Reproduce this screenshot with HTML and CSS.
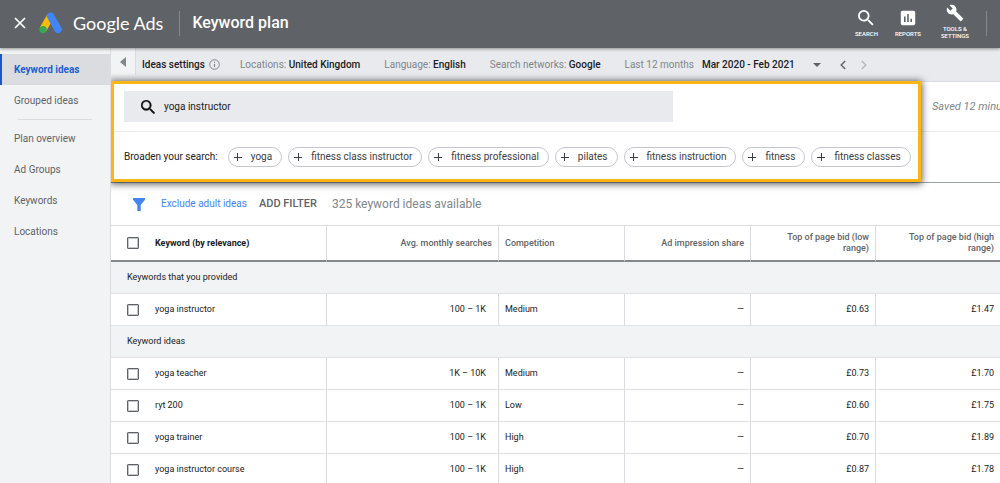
FILE: index.html
```html
<!DOCTYPE html>
<html lang="en">
<head>
<meta charset="utf-8">
<title>Keyword plan - Google Ads</title>
<link rel="stylesheet" href="styles.css">
</head>
<body>
<header class="topbar">
  <button class="close" aria-label="Close"><svg width="12" height="12" viewBox="0 0 12 12"><path d="M1 1l10 10M11 1L1 11" stroke="#fff" stroke-width="1.7"/></svg></button>
  <svg class="logo" width="24" height="22" viewBox="0 0 24 22" aria-hidden="true">
    <path d="M11.600 4.200L4 17.400" stroke="#fbbc04" stroke-width="7.400"/>
    <path d="M11.600 4.200L19 17.400" stroke="#4285f4" stroke-width="7.400" stroke-linecap="round"/>
    <circle cx="4" cy="17.600" r="3.700" fill="#34a853"/>
  </svg>
  <span class="brand">Google Ads</span>
  <span class="rule"></span>
  <h1 class="title">Keyword plan</h1>
  <nav class="tools">
    <button class="tool tool-search"><svg width="16" height="16" viewBox="3 3 18 18"><path fill="#fff" d="M15.500 14h-.79l-.28-.27A6.470 6.470 0 0016 9.500 6.500 6.500 0 109.500 16c1.610 0 3.090-.59 4.230-1.570l.27.28v.79l5 4.990L20.490 19l-4.990-5zm-6 0C7.010 14 5 11.990 5 9.500S7.010 5 9.500 5 14 7.010 14 9.500 11.990 14 9.500 14z"/></svg><span>SEARCH</span></button>
    <button class="tool tool-reports"><svg width="16" height="16" viewBox="2 2 20 20"><path fill="#fff" d="M19 3H5c-1.100 0-2 .9-2 2v14c0 1.100.9 2 2 2h14c1.100 0 2-.9 2-2V5c0-1.100-.9-2-2-2zM9 17H7v-7h2v7zm4 0h-2V7h2v10zm4 0h-2v-4h2v4z"/></svg><span>REPORTS</span></button>
    <button class="tool tool-settings"><svg width="18" height="18" viewBox="0 0 24 24"><path fill="#fff" d="M22.700 19l-9.100-9.100c.9-2.300.4-5-1.500-6.900-2-2-5-2.400-7.400-1.300L9 6 6 9 1.600 4.700C.4 7.100.9 10.100 2.900 12.100c1.900 1.900 4.600 2.400 6.900 1.500l9.100 9.100c.4.4 1 .4 1.400 0l2.300-2.300c.5-.4.5-1.100.1-1.400z"/></svg><span>TOOLS &amp;<br>SETTINGS</span></button>
    <span class="rule"></span>
  </nav>
</header>
<div class="shell">
  <nav class="sidebar">
    <a class="side-link active" href="#ideas">Keyword ideas</a>
    <a class="side-link" href="#grouped">Grouped ideas</a>
    <hr class="side-rule">
    <a class="side-link" href="#overview">Plan overview</a>
    <a class="side-link" href="#groups">Ad Groups</a>
    <a class="side-link" href="#keywords">Keywords</a>
    <a class="side-link" href="#locations">Locations</a>
  </nav>
  <main class="main">
    <div class="settings">
      <button class="collapse" aria-label="Collapse menu"><svg width="6" height="10" viewBox="0 0 6 10"><path d="M6 0v10L0 5z" fill="#80868b"/></svg></button>
      <span class="setting ideas"><b>Ideas settings</b><svg width="11" height="11" viewBox="0 0 11 11"><circle cx="5.500" cy="5.500" r="4.800" fill="none" stroke="#80868b"/><path d="M5.500 5v3M5.500 2.700v1.200" stroke="#80868b" stroke-width="1.100"/></svg></span>
      <span class="setting locations">Locations: <b>United Kingdom</b></span>
      <span class="setting language">Language: <b>English</b></span>
      <span class="setting networks">Search networks: <b>Google</b></span>
      <span class="setting period">Last 12 months</span>
      <button class="dates"><span>Mar 2020 - Feb 2021</span><svg width="8" height="4" viewBox="0 0 8 4"><path d="M0 0h8L4 4z" fill="#5f6368"/></svg></button>
      <button class="step" aria-label="Previous"><svg width="6" height="10" viewBox="0 0 6 10"><path d="M5.200 1L1.200 5l4 4" fill="none" stroke="#5f6368" stroke-width="1.400"/></svg></button>
      <button class="step" aria-label="Next" disabled><svg width="6" height="10" viewBox="0 0 6 10"><path d="M.8 1l4 4-4 4" fill="none" stroke="#b4b8bc" stroke-width="1.400"/></svg></button>
    </div>
    <section class="panel">
      <div class="highlight">
        <div class="search-row">
          <label class="search"><svg width="14" height="14" viewBox="3 3 17.500 17.500"><path fill="#111" stroke="#111" stroke-width=".4" d="M15.500 14h-.79l-.28-.27A6.470 6.470 0 0016 9.500 6.500 6.500 0 109.500 16c1.610 0 3.090-.59 4.230-1.570l.27.28v.79l5 4.990L20.490 19l-4.990-5zm-6 0C7.010 14 5 11.990 5 9.500S7.010 5 9.500 5 14 7.010 14 9.500 11.990 14 9.500 14z"/></svg><input type="text" value="yoga instructor" aria-label="Keywords"></label>
        </div>
        <div class="broaden">
          <span class="broaden-label">Broaden your search:</span>
          <button class="chip"><i class="plus"></i>yoga</button>
          <button class="chip"><i class="plus"></i>fitness class instructor</button>
          <button class="chip"><i class="plus"></i>fitness professional</button>
          <button class="chip"><i class="plus"></i>pilates</button>
          <button class="chip"><i class="plus"></i>fitness instruction</button>
          <button class="chip"><i class="plus"></i>fitness</button>
          <button class="chip"><i class="plus"></i>fitness classes</button>
        </div>
      </div>
      <div class="status"><p class="saved">Saved 12 minutes ago</p></div>
    </section>
    <div class="filters">
      <svg width="12" height="13" viewBox="0 0 12 13"><path d="M0 0h12v1.800L7.700 7v6H4.300V7L0 1.800z" fill="#4285f4"/></svg>
      <a class="exclude" href="#exclude">Exclude adult ideas</a>
      <button class="add">ADD FILTER</button>
      <span class="count">325 keyword ideas available</span>
    </div>
    <table class="grid">
      <colgroup><col><col class="c-search"><col class="c-std"><col class="c-std"><col class="c-low"><col class="c-high"></colgroup>
      <thead>
        <tr><th class="kw"><label><input type="checkbox">Keyword (by relevance)</label></th><th class="num">Avg. monthly searches</th><th>Competition</th><th class="num">Ad impression share</th><th class="num">Top of page bid (low<br>range)</th><th class="num">Top of page bid (high<br>range)</th></tr>
      </thead>
      <tbody>
        <tr class="group"><td colspan="6">Keywords that you provided</td></tr>
        <tr><td class="kw"><label><input type="checkbox">yoga instructor</label></td><td class="num vol">100 – 1K</td><td>Medium</td><td class="num">—</td><td class="num">£0.63</td><td class="num">£1.47</td></tr>
        <tr class="group"><td colspan="6">Keyword ideas</td></tr>
        <tr><td class="kw"><label><input type="checkbox">yoga teacher</label></td><td class="num vol">1K – 10K</td><td>Medium</td><td class="num">—</td><td class="num">£0.73</td><td class="num">£1.70</td></tr>
        <tr><td class="kw"><label><input type="checkbox">ryt 200</label></td><td class="num vol">100 – 1K</td><td>Low</td><td class="num">—</td><td class="num">£0.60</td><td class="num">£1.75</td></tr>
        <tr><td class="kw"><label><input type="checkbox">yoga trainer</label></td><td class="num vol">100 – 1K</td><td>High</td><td class="num">—</td><td class="num">£0.70</td><td class="num">£1.89</td></tr>
        <tr><td class="kw"><label><input type="checkbox">yoga instructor course</label></td><td class="num vol">100 – 1K</td><td>High</td><td class="num">—</td><td class="num">£0.87</td><td class="num">£1.78</td></tr>
      </tbody>
    </table>
  </main>
</div>
</body>
</html>
```
FILE: styles.css
```css
* { box-sizing: border-box; }
body {
  margin: 0;
  height: 100vh;
  display: flex;
  flex-direction: column;
  overflow: hidden;
  font: 10px/16px Roboto, sans-serif;
  color: #202124;
  background: #fff;
}
button { border: 0; padding: 0; margin: 0; background: none; font: inherit; color: inherit; white-space: nowrap; }
svg { display: block; flex: none; }
b { font-weight: 500; color: #202124; }

.topbar {
  flex: none;
  height: 48px;
  display: flex;
  align-items: center;
  padding: 0 13px 0 14px;
  background: #5f6368;
  color: #fff;
  position: relative;
  z-index: 2;
  box-shadow: 0 1px 3px rgba(0, 0, 0, .4);
}
.topbar > * { margin-bottom: 2px; }
.logo { margin-left: 13px; }
.brand { margin-left: 10px; font: 18px/24px Lato, sans-serif; }
.rule { width: 1px; height: 25px; background: #85898d; }
.topbar > .rule { margin-left: 16px; }
.title { margin: 0 0 2px 12px; font-size: 16px; line-height: 24px; font-weight: 500; }
.tools { margin-left: auto; display: flex; height: 46px; align-items: center; }
.tool {
  display: flex;
  flex-direction: column;
  align-items: center;
  gap: 4px;
  font-size: 6px;
  line-height: 7px;
  font-weight: 500;
}
.tool-search { margin-right: 17px; }
.tool-reports { margin-right: 20px; }
.tool-settings { margin-right: 17px; gap: 3px; padding-bottom: 4px; }

.shell { flex: 1; min-height: 0; display: flex; }
.sidebar {
  flex: 0 0 111px;
  padding-top: 6px;
  background: #f1f3f4;
  border-right: 1px solid #dadce0;
}
.side-link {
  display: block;
  height: 31px;
  padding-left: 14px;
  line-height: 31px;
  color: #5f6368;
  text-decoration: none;
}
.side-link.active {
  padding-left: 12px;
  border-left: 2px solid #1a56c8;
  background: #dadce0;
  color: #1a5fd0;
  font-weight: 700;
}
.side-rule { margin: 3px 18px; border: 0; border-top: 1px solid #dadce0; }

.main { flex: 1; min-width: 0; overflow: hidden; }
.settings {
  display: flex;
  align-items: center;
  height: 33px;
  background: #e8eaed;
  color: #80868b;
  white-space: nowrap;
}
.collapse {
  display: flex;
  align-items: center;
  justify-content: center;
  align-self: flex-start;
  width: 25px;
  height: 27px;
  background: #f1f3f4;
  border-right: 1px solid #dadce0;
}
.ideas { display: flex; align-items: center; gap: 4px; margin: 0 20px 0 6px; }
.locations, .language, .networks { margin-right: 24px; }
.dates {
  display: flex;
  align-items: center;
  gap: 18px;
  margin: 0 19px 0 8px;
  font-weight: 500;
  color: #202124;
}
.step { margin-right: 15px; }

.panel { display: flex; border-bottom: 1px solid #9aa0a6; }
.highlight {
  flex: 0 1 810px;
  position: relative;
  z-index: 1;
  border: 3px solid #fbb615;
  background: #fff;
  box-shadow: 0 1px 7px 1px rgba(32, 33, 36, .75);
}
.search-row { padding: 7px 10px 9px; border-bottom: 1px solid #e8eaed; }
.search {
  display: flex;
  align-items: center;
  width: 70%;
  height: 31px;
  padding-left: 17px;
  gap: 9px;
  background: #e8eaed;
}
.search input { flex: 1; border: 0; padding: 0; background: none; font: inherit; color: #202124; outline: 0; }
.broaden { display: flex; align-items: center; gap: 6px; padding: 15px 5px 12px 10px; white-space: nowrap; }
.broaden-label { margin-right: 4px; }
.chip {
  display: flex;
  align-items: center;
  gap: 9px;
  height: 20px;
  padding: 0 9px 0 5px;
  border: 1px solid #c4c7cc;
  border-radius: 10px;
  color: #3c4043;
}
.plus {
  width: 8px;
  height: 8px;
  background: linear-gradient(#3c4043, #3c4043) center / 8px 1px no-repeat, linear-gradient(#3c4043, #3c4043) center / 1px 8px no-repeat;
}
.status { flex: 1; min-width: 0; overflow: hidden; border-top: 1px solid #dadce0; }
.saved {
  height: 50px;
  margin: 0;
  padding-left: 11px;
  font-size: 11px;
  line-height: 50px;
  font-style: italic;
  white-space: nowrap;
  color: #80868b;
  border-bottom: 1px solid #e8eaed;
}

.filters { display: flex; align-items: center; height: 42px; padding-left: 22px; white-space: nowrap; }
.exclude { margin-left: 16px; color: #4285f4; text-decoration: none; }
.add { margin-left: 12px; font-size: 11px; font-weight: 500; color: #5f6368; }
.count { margin-left: 15px; font-size: 12px; color: #80868b; }

.grid { width: 100%; table-layout: fixed; border-collapse: separate; border-spacing: 0; font-size: 9px; line-height: 11px; }
.c-search { width: 172px; }
.c-std { width: 126px; }
.c-low { width: 125px; }
.c-high { width: 124px; }
.grid th, .grid td { padding: 0 6px; text-align: left; border-right: 1px solid #dadce0; border-bottom: 1px solid #e0e2e5; }
.grid th { height: 37px; font-weight: 500; color: #5f6368; border-top: 1px solid #dadce0; border-bottom: 2px solid #85888b; }
.grid td { height: 32px; }
.grid tr > :last-child { border-right: 0; }
.grid .num { text-align: right; }
.grid .vol { padding-right: 12px; }
.grid .kw { padding-left: 16px; }
.grid th.kw { color: #202124; font-weight: 700; }
.grid label { display: flex; align-items: center; gap: 16px; }
.grid .group td { height: 32px; padding-left: 16px; background: #f1f3f4; }
.grid input {
  appearance: none;
  width: 12px;
  height: 12px;
  margin: 0;
  border: 1px solid #5f6368;
  outline: 1px solid #c4c6c8;
  outline-offset: -2px;
  border-radius: 1px;
  background: #fff;
}
```
